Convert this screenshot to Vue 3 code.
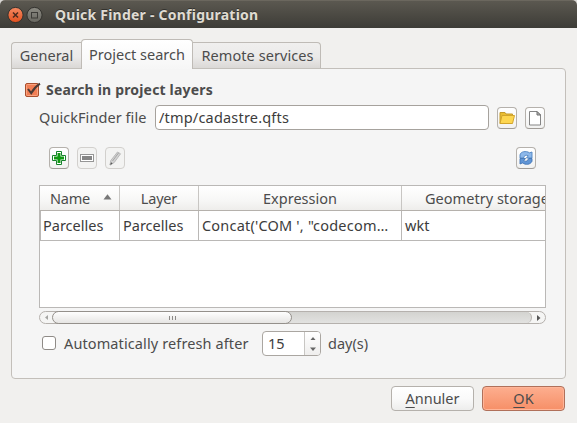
<script setup>
import { ref } from 'vue'

const tabs = ['General', 'Project search', 'Remote services']
const active = ref(1)
const file = ref('/tmp/cadastre.qfts')
const days = ref(15)
const columns = ['Name', 'Layer', 'Expression', 'Geometry storage']
const row = ['Parcelles', 'Parcelles', 'Concat(\'COM \', "codecom…', 'wkt']
</script>

<template>
  <div class="dialog">
    <header class="titlebar">
      <svg class="wm" width="36" height="18" viewBox="0 0 36 18">
        <defs>
          <linearGradient id="wmClose" x1="0" y1="0" x2="0" y2="1">
            <stop offset="0" stop-color="#f58a62" /><stop offset="1" stop-color="#e2501e" />
          </linearGradient>
          <linearGradient id="wmMax" x1="0" y1="0" x2="0" y2="1">
            <stop offset="0" stop-color="#8c8b83" /><stop offset="1" stop-color="#67665f" />
          </linearGradient>
        </defs>
        <circle cx="8.5" cy="9" r="7.6" fill="url(#wmClose)" stroke="#33322e" />
        <path d="M6 6.5l5 5M11 6.5l-5 5" stroke="#4a2a1e" stroke-width="1.5" />
        <circle cx="27.5" cy="9" r="7.6" fill="url(#wmMax)" stroke="#33322e" />
        <rect x="24.5" y="6.5" width="6" height="5.5" fill="none" stroke="#3c3b37" />
      </svg>
      <span class="title">Quick Finder - Configuration</span>
    </header>

    <nav class="tabs">
      <button
        v-for="(t, i) in tabs"
        :key="t"
        class="tab"
        :class="['tab-' + i, { active: i === active }]"
        @click="active = i"
      ><span>{{ t }}</span></button>
    </nav>

    <main class="panel">
      <div class="group-title">
        <svg width="18" height="17" viewBox="0 0 18 17">
          <rect x="1.5" y="1.5" width="13" height="13" rx="1.5" fill="#f17e55" stroke="#a84f2f" />
          <rect x="2.5" y="2.5" width="11" height="11" rx="1" fill="none" stroke="#f9a481" />
          <path d="M4 7l3.2 4.2C9.500 7 12 4.200 16 1.700" fill="none" stroke="#4b3a35" stroke-width="2" />
        </svg>
        <b>Search in project layers</b>
      </div>

      <div class="file-row">
        <label class="t-file">QuickFinder file</label>
        <div class="field"><span class="t-path">{{ file }}</span></div>
        <button class="tool">
          <svg width="18" height="18" viewBox="0 0 18 18">
            <path d="M2 14.500V3.500h5l1 1.500h6.500v2" fill="#e9bd32" stroke="#c49a2a" />
            <path d="M2 14.500L4 6.500h12.500L14.500 14.500z" fill="#fdd650" stroke="#d2a52d" />
          </svg>
        </button>
        <button class="tool">
          <svg width="18" height="18" viewBox="0 0 18 18">
            <path d="M3.500 2.500h7.500l3.500 3.500v10h-11z" fill="#fff" stroke="#858585" />
            <path d="M11 2.500V6h3.500z" fill="#bbb" stroke="#6e6e6e" />
          </svg>
        </button>
      </div>

      <div class="tool-row">
        <button class="tool">
          <svg width="18" height="18" viewBox="0 0 18 18">
            <path d="M6.500 2.500h5v4h4v5h-4v4h-5v-4h-4v-5h4z" fill="#fff" stroke="#16822b" />
            <path d="M9 4v10M4 9h10" stroke="#109a12" stroke-width="3" />
          </svg>
        </button>
        <button class="tool off">
          <svg width="18" height="18" viewBox="0 0 18 18">
            <rect x="2.500" y="5.500" width="13" height="7" fill="#fff" stroke="#969696" />
            <rect x="4" y="7" width="10" height="4" fill="#858585" />
          </svg>
        </button>
        <button class="tool off">
          <svg width="18" height="18" viewBox="0 0 18 18">
            <path d="M4 16l.8-4.500L11.500 3l3 1.800-6.300 8.700z" fill="#d3d3d3" stroke="#b9b9b9" />
            <path d="M6.500 12L12.500 4M4 16l1.200-2.500 1.200 1z" stroke="#999" stroke-width=".8" />
          </svg>
        </button>
        <button class="tool refresh">
          <svg width="18" height="18" viewBox="0 0 18 18">
            <path d="M3 9V6C3.500 2.500 9 1.500 12.500 3.800L15 3v6H9.500l1.800-2.200C9 5.600 7 6.500 6.500 9z" fill="#8db8ea" stroke="#4f83c2" stroke-width=".9" />
            <path d="M15 9.500v2.700c-1.500 3.600-6.500 4-9.500 1.700L3 15V9.500h5.500l-1.800 2.200c2 1.200 4.300.3 5-2.200z" fill="#5f95d6" stroke="#4375b4" stroke-width=".9" />
          </svg>
        </button>
      </div>

      <div class="table">
        <div class="tr head">
          <div v-for="(c, i) in columns" :key="c" class="th" :class="'h-' + i">
            <span>{{ c }}</span>
            <svg v-if="i === 0" class="sort" width="9" height="6" viewBox="0 0 9 6">
              <path d="M4.500 .3L8.500 5.500h-8z" fill="#777" />
            </svg>
          </div>
        </div>
        <div class="tr body">
          <div v-for="(c, i) in row" :key="i" class="td" :class="'c-' + i"><span>{{ c }}</span></div>
        </div>
      </div>

      <div class="scroll">
        <span class="arrow"><svg width="3" height="5" viewBox="0 0 3 5"><path d="M3 0v5L0 2.500z" fill="#a5a5a3" /></svg></span>
        <div class="thumb"><i /><i /><i /></div>
        <div class="groove" />
        <span class="arrow end"><svg width="4" height="6" viewBox="0 0 4 6"><path d="M0 0v6l3.500-3z" fill="#555" /></svg></span>
      </div>

      <div class="auto-row">
        <span class="check" />
        <label class="t-auto">Automatically refresh after</label>
        <div class="spin">
          <span class="t-num">{{ days }}</span>
          <div class="steps">
            <svg width="6" height="3" viewBox="0 0 6 3"><path d="M3 0l2.500 3h-5z" fill="#666" /></svg>
            <svg width="6" height="4" viewBox="0 0 6 4"><path d="M0 .5h6L3 4z" fill="#666" /></svg>
          </div>
        </div>
        <span class="t-day">day(s)</span>
      </div>
    </main>

    <footer class="actions">
      <button class="btn"><span class="t-cancel"><u>A</u>nnuler</span></button>
      <button class="btn ok"><span class="t-ok"><u>O</u>K</span></button>
    </footer>
  </div>
</template>

<style>
body { background: #d9d7d4; }
</style>

<style scoped>
* { box-sizing: border-box; }
.dialog {
  width: 577px; height: 423px; overflow: hidden;
  background: #f1f0ee; border-radius: 5px 5px 0 0;
  font: 14.500px/20px "Noto Sans", sans-serif; color: #4c4c4c;
  display: flex; flex-direction: column;
}
span, label, b { white-space: nowrap; }
button { font: inherit; color: inherit; padding: 0; margin: 0; }
svg { display: block; flex: none; }

.titlebar {
  height: 28px; flex: none; display: flex; align-items: center; padding: 0 0 0 7px;
  background: linear-gradient(#5b5850, #3d3c37); border-top: 1px solid #6b675e;
}
.title {
  margin-left: 12px; font-weight: 700; font-size: 14px; color: #dfdbd2;
  text-shadow: 0 -1px 0 #33322e; letter-spacing: .23px;
}

.tabs { height: 41px; flex: none; display: flex; align-items: flex-end; padding-left: 11px; position: relative; z-index: 1; }
.tab {
  height: 27px; display: flex; justify-content: center; align-items: center;
  border: 1px solid #bfbbb6; border-bottom-color: #c3c0bb; border-radius: 4px 4px 0 0;
  background: linear-gradient(#f0efee, #ebeae9 55%, #dad8d6); padding-bottom: 2px;
}
.tab-0 { width: 70px; border-right: 0; border-top-right-radius: 0; }
.tab-1 { width: 112px; }
.tab-2 { width: 128px; border-left: 0; border-top-left-radius: 0; padding-left: 2px; letter-spacing: .06px; }
.tab.active { height: 30px; border-bottom: 0; background: linear-gradient(#fff, #f6f6f6); padding-bottom: 2px; }

.panel {
  width: 555px; height: 311px; flex: none; margin: -1px 0 0 11px; padding: 9px 19px 0 27px;
  border: 1px solid #c3bfba; border-radius: 0 4px 4px 4px; background: #f5f5f5;
  display: flex; flex-direction: column;
}
.group-title { display: flex; align-items: center; height: 24px; margin-left: -15px; gap: 4px; }
.group-title svg { margin-top: 1px; }
.group-title b { font-size: 14px; letter-spacing: .18px; }
.file-row { display: flex; align-items: center; height: 25px; margin-top: 3px; }
.file-row label { width: 116px; margin-top: -1px; letter-spacing: .06px; }
.field {
  width: 334px; height: 25px; display: flex; align-items: center; padding: 0 0 2px 3px;
  background: #fff; border: 1px solid #a6a29d; border-radius: 4px; color: #3c3c3c; letter-spacing: .19px;
}
.tool {
  width: 20px; height: 22px; flex: none; display: flex; align-items: center; justify-content: center;
  border: 1px solid #b5b1ac; border-bottom-color: #a09c97; border-radius: 4px; background: linear-gradient(#fff, #f2f2f1);
}
.file-row .tool { margin-left: 8px; }
.tool.off { border-color: #d2d0cd; background: #f3f3f2; }
.tool-row { display: flex; gap: 8px; margin-top: 17px; padding: 0 10px; }
.refresh { margin-left: auto; }

.table { height: 123px; width: 507px; margin-top: 16px; border: 1px solid #bab8b6; background: #fff; overflow: hidden; }
.tr { display: grid; grid-template-columns: 80px 79px 203px 1fr; }
.head { height: 25px; background: linear-gradient(#fff, #f7f7f6 60%, #eeedeb); border-bottom: 1px solid #b5b1ac; }
.th { display: flex; align-items: center; justify-content: center; border-right: 1px solid #c8c6c3; overflow: hidden; }
.th:last-child, .td:last-child { border-right: 0; }
.h-0 { justify-content: flex-start; padding-left: 10px; letter-spacing: -.2px; }
.h-1 { letter-spacing: -.2px; }
.h-3 { justify-content: flex-start; padding-left: 23px; letter-spacing: .03px; }
.sort { margin: 0 0 3px 13px; }
.body { height: 30px; border-bottom: 1px solid #bab8b6; border-left: 1px solid #bab8b6; grid-template-columns: 79px 79px 203px 1fr; color: #3c3c3c; }
.td { display: flex; align-items: center; padding: 0 0 1px 3px; border-right: 1px solid #bab8b6; overflow: hidden; }
.c-0 { padding-left: 2px; }
.c-2 { letter-spacing: .2px; }

.scroll {
  width: 507px; height: 13px; margin-top: 3px; display: flex; flex: none;
  border: 1px solid #b5b1ad; border-radius: 7px; background: #f5f5f4;
}
.arrow { width: 12px; flex: none; display: flex; align-items: center; justify-content: center; }
.arrow.end { width: 13px; }
.groove {
  flex: 1; margin-left: -8px; border-right: 1px solid #b5b1ad; border-radius: 0 7px 7px 0;
  background: linear-gradient(#d3d3d0, #e2e2e0);
}
.thumb {
  width: 240px; margin: -1px 0; display: flex; align-items: center; justify-content: center; gap: 2px; z-index: 1;
  border: 1px solid #94908b; border-radius: 7px; background: linear-gradient(#fefefe, #e6e5e3);
}
.thumb i { width: 1px; height: 4px; background: #8c8a87; }

.auto-row { display: flex; align-items: center; height: 25px; margin-top: 7px; padding-left: 3px; }
.check { width: 14px; height: 14px; flex: none; margin-top: -2px; border: 1px solid #8f8b87; border-radius: 3px; background: #fff; }
.t-auto { margin: -2px 0 0 8px; width: 198px; letter-spacing: .11px; }
.spin {
  width: 59px; height: 25px; flex: none; display: flex; overflow: hidden;
  border: 1px solid #aaa6a1; border-radius: 4px; background: #fff; color: #3c3c3c;
}
.t-num { width: 42px; padding: 1px 0 0 5px; border-right: 1px solid #c8c6c3; }
.steps { flex: 1; display: flex; flex-direction: column; align-items: center; justify-content: space-between; padding: 5px 0 4px; background: linear-gradient(#fff, #efeeed); }
.t-day { margin: -1px 0 0 7px; }

.actions { display: flex; justify-content: flex-end; gap: 8px; padding: 7px 12px 0 0; }
.btn {
  width: 83px; height: 25px; display: flex; align-items: center; justify-content: center; padding-bottom: 2px;
  border: 1px solid #b5b1ac; border-radius: 4px; background: linear-gradient(#fff, #fafafa 50%, #ededec);
}
.btn.ok { border-color: #b0705a; background: linear-gradient(#fdae8f, #f68f67); box-shadow: inset 0 0 0 1px #ffb598; }
.btn u { text-underline-offset: 3px; text-decoration-thickness: 1px; }
</style>
